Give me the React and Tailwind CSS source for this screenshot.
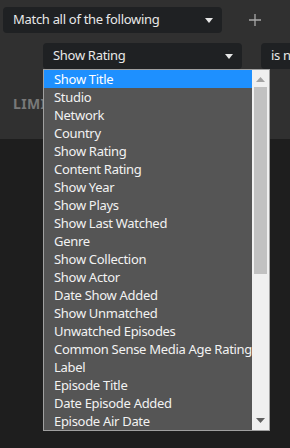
const fields = [
  "Show Title",
  "Studio",
  "Network",
  "Country",
  "Show Rating",
  "Content Rating",
  "Show Year",
  "Show Plays",
  "Show Last Watched",
  "Genre",
  "Show Collection",
  "Show Actor",
  "Date Show Added",
  "Show Unmatched",
  "Unwatched Episodes",
  "Common Sense Media Age Rating",
  "Label",
  "Episode Title",
  "Date Episode Added",
  "Episode Air Date",
];

function Caret() {
  return (
    <svg width="8" height="5" viewBox="0 0 8 5" className="shrink-0">
      <path d="M0 0h8L4 5z" fill="#e6e6e6" />
    </svg>
  );
}

function Select({ label, className }) {
  return (
    <div
      className={`h-[26px] rounded bg-[#1f2123] flex items-center justify-between pl-[10px] pr-[9px] text-[13px] tracking-[-0.3px] text-[#e8e8e8] shrink-0 ${className}`}
    >
      <span className="whitespace-nowrap">{label}</span>
      <Caret />
    </div>
  );
}

export default function App() {
  return (
    <div
      className="relative h-[448px] w-[290px] overflow-hidden bg-[#1e1e1e]"
      style={{ fontFamily: '"Noto Sans", "Open Sans", sans-serif' }}
    >
      {/* filter panel */}
      <div className="h-[139px] bg-[#303030] pt-[7px] pl-[3px]">
        <div className="flex items-center">
          <Select label="Match all of the following" className="w-[219px]" />
          <svg width="12" height="12" viewBox="0 0 12 12" className="ml-[27px]">
            <path d="M6 0v12M0 6h12" stroke="#a8a8a8" strokeWidth="1.3" />
          </svg>
        </div>
        <div className="flex gap-[19px] mt-[10px] pl-[40px]">
          <Select label="Show Rating" className="w-[199px]" />
          <Select label="is not" className="w-[110px]" />
        </div>
        <p className="mt-[24px] pl-[10px] text-[14px] font-bold text-[#787878] tracking-wide">LIMIT</p>
      </div>

      {/* open dropdown */}
      <div className="absolute left-[43px] top-[69px] w-[227px] border border-[#a0a0a0] bg-[#555555] flex">
        <ul className="flex-1 text-[13px] tracking-[-0.3px] text-[#f2f2f2] leading-[18px]">
          {fields.map((f, i) => (
            <li
              key={f}
              className={`h-[18px] pl-[10px] whitespace-nowrap ${i === 0 ? "bg-[#1e90ff] text-white" : ""}`}
            >
              {f}
            </li>
          ))}
        </ul>
        <div className="w-[17px] bg-[#f0f0f0] flex flex-col items-center">
          <svg width="9" height="5" viewBox="0 0 9 5" className="mt-[7px]">
            <path d="M0 5h9L4.5 0z" fill="#a3a3a3" />
          </svg>
          <div className="mt-[5px] w-[13px] h-[187px] bg-[#c1c1c1]" />
          <svg width="9" height="5" viewBox="0 0 9 5" className="mt-auto mb-[7px]">
            <path d="M0 0h9L4.5 5z" fill="#606060" />
          </svg>
        </div>
      </div>
    </div>
  );
}
